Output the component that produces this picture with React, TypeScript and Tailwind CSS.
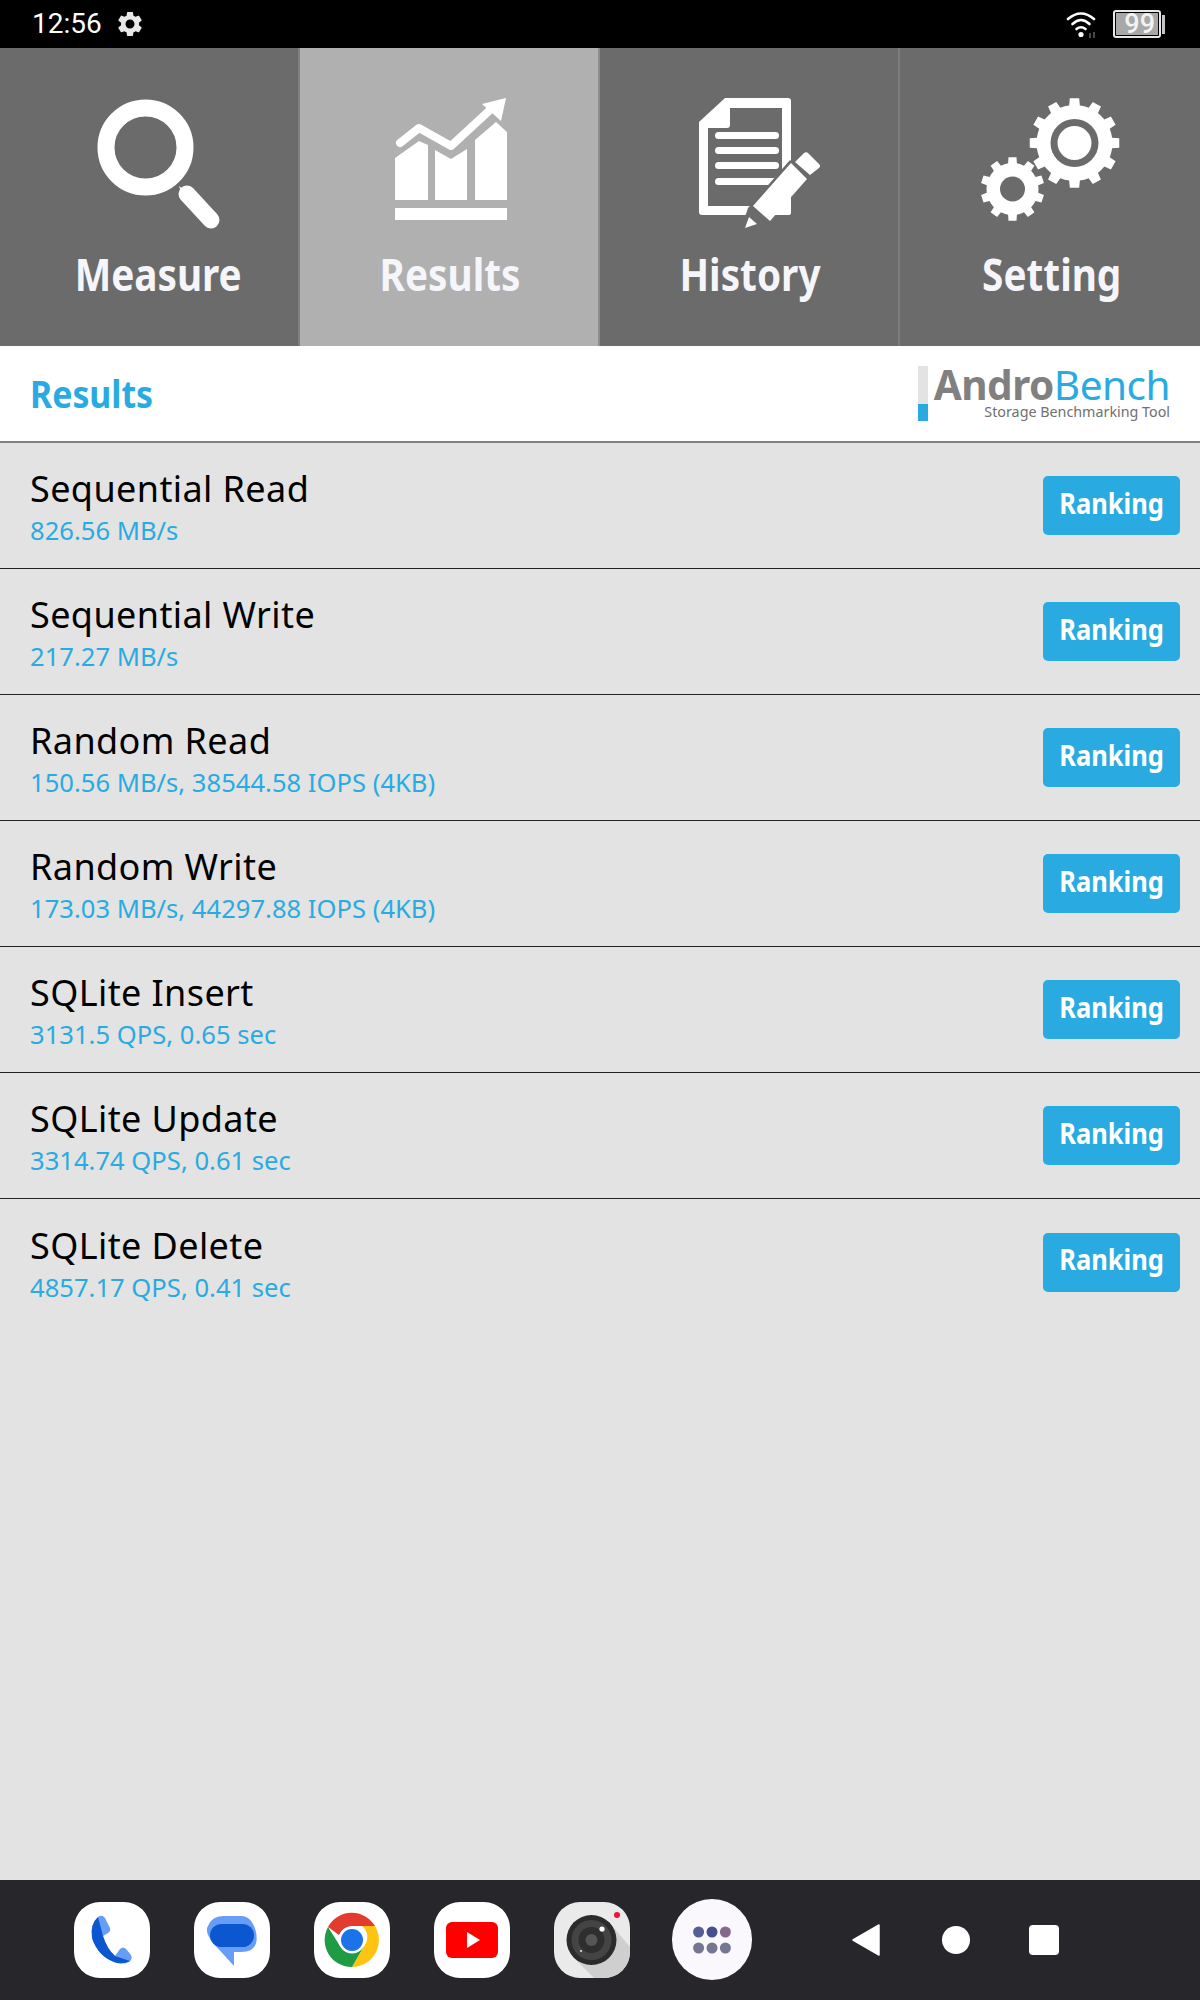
import React from "react";

function gearPath(cx: number, cy: number, rOuter: number, rRoot: number, teeth: number) {
  const pts: string[] = [];
  const step = (Math.PI * 2) / teeth;
  for (let i = 0; i < teeth; i++) {
    const a = i * step - Math.PI / 2;
    const seq: [number, number][] = [
      [-0.5, rRoot],
      [-0.27, rRoot],
      [-0.2, rOuter],
      [0.2, rOuter],
      [0.27, rRoot],
    ];
    for (const [o, r] of seq) {
      const t = a + o * step;
      pts.push(`${(cx + r * Math.cos(t)).toFixed(2)},${(cy + r * Math.sin(t)).toFixed(2)}`);
    }
  }
  return pts.join(" ");
}

const rows = [
  ["Sequential Read", "826.56 MB/s"],
  ["Sequential Write", "217.27 MB/s"],
  ["Random Read", "150.56 MB/s, 38544.58 IOPS (4KB)"],
  ["Random Write", "173.03 MB/s, 44297.88 IOPS (4KB)"],
  ["SQLite Insert", "3131.5 QPS, 0.65 sec"],
  ["SQLite Update", "3314.74 QPS, 0.61 sec"],
  ["SQLite Delete", "4857.17 QPS, 0.41 sec"],
];

function SearchIcon() {
  return (
    <svg viewBox="0 0 300 190" className="block w-[300px] h-[190px]">
      <circle cx="145.5" cy="99.5" r="39.5" fill="none" stroke="#fff" strokeWidth="17" />
      <path d="M187 146 L211 172" stroke="#fff" strokeWidth="17" strokeLinecap="round" />
      <path d="M179 138 L190 146 L184 152 Z" fill="#fff" />
    </svg>
  );
}

function ResultsIcon() {
  return (
    <svg viewBox="300 48 300 190" className="block w-[300px] h-[190px]">
      <g fill="#fff">
        <rect x="395" y="208" width="112" height="12" />
        <path d="M395 158 L419 141 L428 145 L428 200 L395 200 Z" />
        <path d="M435 150 L451 159 L467 149 L467 200 L435 200 Z" />
        <path d="M475 140 L496 122 L507 132 L507 200 L475 200 Z" />
        <path d="M482 104 L506 98 L501 121 Z" />
      </g>
      <path d="M400 143 L419 128 L451 146 L490 110" fill="none" stroke="#fff" strokeWidth="8" strokeLinecap="round" strokeLinejoin="round" />
    </svg>
  );
}

function HistoryIcon() {
  return (
    <svg viewBox="600 48 300 190" className="block w-[300px] h-[190px]">
      <path fill="#fff" d="M725 98 L788 98 Q791 98 791 101 L791 212 Q791 215 788 215 L702 215 Q699 215 699 212 L699 122 Z" />
      <path fill="#6b6b6b" d="M730 108 L782 108 L782 206 L708 206 L708 128 L727 128 Q730 128 730 125 Z" />
      <g fill="#fff">
        <rect x="715" y="132" width="64" height="7" rx="3.5" />
        <rect x="715" y="147" width="64" height="7" rx="3.5" />
        <rect x="715" y="162" width="64" height="7" rx="3.5" />
        <rect x="715" y="178" width="64" height="7" rx="3.5" />
      </g>
      <path fill="#6b6b6b" d="M748 208 L790 160 L812 180 L772 228 L740 232 Z" />
      <path fill="#fff" d="M753 206 L791 163 L807 179 L770 221 Z" />
      <path fill="#fff" d="M795 162 L804 153 Q807 151 809 154 L819 164 Q821 166 819 168 L810 175 Z" />
      <path fill="#fff" d="M749 217 L757 224 L745 228 Z" />
      <path fill="#fff" d="M791 196 L791 212 Q791 215 788 215 L774 215 Z" />
    </svg>
  );
}

function SettingIcon() {
  return (
    <svg viewBox="900 48 300 190" className="block w-[300px] h-[190px]">
      <polygon fill="#fff" points={gearPath(1074.5, 143, 45, 38, 12)} />
      <circle cx="1074.5" cy="143" r="24" fill="#6b6b6b" />
      <circle cx="1074.5" cy="143" r="17" fill="#fff" />
      <polygon fill="#fff" points={gearPath(1012.5, 189, 32, 26, 10)} />
      <circle cx="1012.5" cy="189" r="12.5" fill="#6b6b6b" />
    </svg>
  );
}

function Tab({ label, active, icon, extra, border }: { label: string; active?: boolean; icon: React.ReactNode; extra: string; border: string }) {
  return (
    <div className={`h-[298px] border-r-2 ${border} ${active ? "bg-[#b0b0b0]" : "bg-[#6b6b6b]"}`}>
      {icon}
      <div className={`w-[300px] text-center text-[45px] leading-[50px] pt-[11px] font-bold text-[#f5f5fa] scale-x-[0.86] ${extra}`}>{label}</div>
    </div>
  );
}

function Squircle({ children, bg = "bg-white" }: { children: React.ReactNode; bg?: string }) {
  return (
    <div className={`w-[76px] h-[76px] rounded-[26px] overflow-hidden ${bg}`}>
      <svg viewBox="0 0 76 76" className="block w-[76px] h-[76px]">
        {children}
      </svg>
    </div>
  );
}

export default function App() {
  return (
    <div className="w-[1200px] h-[2000px] flex flex-col bg-[#e3e3e3] font-['Noto_Sans','Open_Sans',sans-serif] overflow-hidden">
      {/* status bar */}
      <div className="h-[48px] bg-black flex items-center pl-[32px] pr-[35px] text-white">
        <span className="font-['Roboto',sans-serif] text-[28px] leading-none">12:56</span>
        <svg viewBox="0 0 24 24" className="ml-[13px] w-[30px] h-[30px]" fill="#e8e8e8">
          <path d="M19.14 12.94c.04-.3.06-.61.06-.94 0-.32-.02-.64-.07-.94l2.03-1.58a.49.49 0 0 0 .12-.61l-1.92-3.32a.488.488 0 0 0-.59-.22l-2.39.96c-.5-.38-1.03-.7-1.62-.94l-.36-2.54a.484.484 0 0 0-.48-.41h-3.84c-.24 0-.43.17-.47.41l-.36 2.54c-.59.24-1.13.57-1.62.94l-2.39-.96c-.22-.08-.47 0-.59.22L2.74 8.87c-.12.21-.08.47.12.61l2.03 1.58c-.05.3-.09.63-.09.94s.02.64.07.94l-2.03 1.58a.49.49 0 0 0-.12.61l1.92 3.32c.12.22.37.29.59.22l2.39-.96c.5.38 1.03.7 1.62.94l.36 2.54c.05.24.24.41.48.41h3.84c.24 0 .44-.17.47-.41l.36-2.54c.59-.24 1.13-.56 1.62-.94l2.39.96c.22.08.47 0 .59-.22l1.92-3.32c.12-.22.07-.47-.12-.61l-2.01-1.58zM12 15.6c-1.98 0-3.6-1.62-3.6-3.6s1.62-3.6 3.6-3.6 3.6 1.62 3.6 3.6-1.62 3.6-3.6 3.6z" />
        </svg>
        <div className="flex-1" />
        <svg viewBox="0 0 32 28" className="w-[32px] h-[28px]">
          <g fill="none" stroke="#fff" strokeWidth="2.6" strokeLinecap="round">
            <path d="M2 9 Q15 -2 28 9" />
            <path d="M6.5 14 Q15 6 23.5 14" />
            <path d="M10.5 19 Q15 15.5 19.5 19" />
          </g>
          <circle cx="15" cy="24.5" r="2.6" fill="#fff" />
          <path d="M24 28 V23 M28 28 V22" stroke="#777" strokeWidth="1.2" />
        </svg>
        <div className="ml-[15px] w-[52px] h-[28px] flex items-center">
          <div className="w-[48px] h-[28px] shrink-0 rounded-[3px] border-2 border-[#e8e8e8] bg-black p-[1px]">
            <div className="h-full bg-[#a8a8a8] flex items-center justify-end pr-[3px]">
              <span className="font-['Roboto',sans-serif] font-medium text-[27px] leading-[22px] text-[#f2f2f2]">99</span>
            </div>
          </div>
          <div className="w-[3px] h-[19px] bg-[#c4c4c4] ml-[1px]" />
        </div>
      </div>

      {/* nav */}
      <div className="grid grid-cols-4">
        <Tab label="Measure" icon={<SearchIcon />} extra="pl-[19px]" border="border-[#808080]" />
        <Tab label="Results" active icon={<ResultsIcon />} extra="" border="border-[#8c8c8c]" />
        <Tab label="History" icon={<HistoryIcon />} extra="" border="border-[#7c7c7c]" />
        <Tab label="Setting" icon={<SettingIcon />} extra="pl-[4px]" border="border-transparent" />
      </div>

      {/* header */}
      <div className="h-[97px] bg-white border-b-2 border-[#808080] flex items-center justify-between pl-[30px] pr-[30px]">
        <span className="text-[38px] leading-[50px] -mt-[2px] font-bold text-[#29abe2] scale-x-[0.89] origin-left">Results</span>
        <div className="flex gap-[6px] items-stretch h-[55px]">
          <div className="w-[10px] flex flex-col bg-[#e3e3e3] justify-end">
            <div className="h-[17px] bg-[#29abe2]" />
          </div>
          <div className="flex flex-col items-end">
            <div className="text-[40.5px] leading-[37px] tracking-[-0.5px]">
              <span className="font-bold text-[#808080]">Andro</span>
              <span className="text-[#29abe2]">Bench</span>
            </div>
            <div className="text-[14.3px] leading-[18px] text-[#707070]">Storage Benchmarking Tool</div>
          </div>
        </div>
      </div>

      {/* rows */}
      <div className="flex flex-col">
        {rows.map(([t, s]) => (
          <div key={t} className="h-[126px] shrink-0 flex items-center justify-between pl-[30px] pr-[20px] border-b border-[#222] last:border-b-0">
            <div className="flex flex-col mt-[2px]">
              <span className="text-[36px] leading-[46px] tracking-[0.4px] text-black">{t}</span>
              <span className="text-[25.6px] leading-[33px] pt-[2px] text-[#29abe2]">{s}</span>
            </div>
            <div className="w-[137px] h-[59px] rounded-[5px] bg-[#29abe2] flex items-center justify-center text-white font-bold text-[29px] leading-[40px]">
              <span className="scale-x-[0.88] -mt-[6px]">Ranking</span>
            </div>
          </div>
        ))}
      </div>

      <div className="flex-1" />

      {/* dock */}
      <div className="h-[120px] bg-[#26262b] flex items-center pl-[74px]">
        <div className="flex items-center gap-[44px]">
          <Squircle>
            <path fill="#669df6" d="M24 15 Q28 12 31 16 L36 26 Q37 29 34 31 L29 34 Q33 47 41 54 L46 47 Q49 44 52 47 L57 53 Q59 57 55 60 Q48 63 40 60 Q24 54 18 36 Q16 22 24 15 Z" />
            <path fill="#0b57d0" d="M24 15 L29 34 Q33 47 41 54 L56 59 Q48 63 40 60 Q24 54 18 36 Q16 22 24 15 Z" />
          </Squircle>
          <Squircle>
            <path fill="#669df6" d="M29 14 L47 14 Q58 14 62 30 Q66 50 47 50 L40 50 L40 64 L20 42 Q10 30 14 24 Q18 14 29 14 Z" />
            <rect x="16" y="22" width="44" height="23" rx="11.5" fill="#0b57d0" />
          </Squircle>
          <Squircle>
            <path fill="#e33b2e" d="M14 25 A27 27 0 0 1 61 24 L38 24 A14 14 0 0 0 25 33 Z" />
            <path fill="#ffc412" d="M61 24 A27 27 0 0 1 38 65 L50 44 A14 14 0 0 0 48 24 Z" />
            <path fill="#1f9a45" d="M14 25 A27 27 0 0 0 38 65 L50 44 A14 14 0 0 1 26 44 Z" />
            <circle cx="38" cy="38" r="13.5" fill="#fff" />
            <circle cx="38" cy="38" r="11" fill="#1a73e8" />
          </Squircle>
          <Squircle>
            <rect x="12" y="20" width="52" height="36" rx="6" fill="#ff0000" />
            <path d="M33 30 L46 38 L33 46 Z" fill="#fff" />
          </Squircle>
          <Squircle bg="bg-[#eaeaea]">
            <path d="M55 20 L76 45 L76 76 L40 76 L20 56 Z" fill="#cfcfcf" />
            <circle cx="37.5" cy="38" r="25" fill="#2b2b2b" />
            <circle cx="37.5" cy="38" r="20" fill="#444" />
            <circle cx="37.5" cy="38" r="13" fill="#2e2e2e" />
            <circle cx="37.5" cy="38" r="6" fill="#555" />
            <circle cx="63" cy="13" r="3" fill="#f0133c" />
            <circle cx="48" cy="27" r="2.6" fill="#fff" />
            <circle cx="27" cy="49" r="1" fill="#eee" />
          </Squircle>
        </div>
        <div className="ml-[42px] w-[80px] h-[81px] rounded-full bg-[#fbf8fd] -mt-[1px]">
          <svg viewBox="0 0 80 81" className="block w-[80px] h-[81px]">
            <circle cx="26.6" cy="33" r="5.5" fill="#565e96" />
            <circle cx="40" cy="33" r="5.5" fill="#464f8f" />
            <circle cx="53.4" cy="33" r="5.5" fill="#86688a" />
            <circle cx="26.6" cy="49" r="5.5" fill="#757790" />
            <circle cx="40" cy="49" r="5.5" fill="#757790" />
            <circle cx="53.4" cy="49" r="5.5" fill="#757790" />
          </svg>
        </div>
        <svg viewBox="0 0 28 32" className="ml-[100px] w-[28px] h-[32px]">
          <path d="M27 1 V31 L1 16 Z" fill="#fff" stroke="#fff" strokeWidth="1.5" strokeLinejoin="round" />
        </svg>
        <div className="ml-[62px] w-[28px] h-[28px] rounded-full bg-white" />
        <div className="ml-[59px] w-[30px] h-[30px] rounded-[4px] bg-white" />
      </div>
    </div>
  );
}
